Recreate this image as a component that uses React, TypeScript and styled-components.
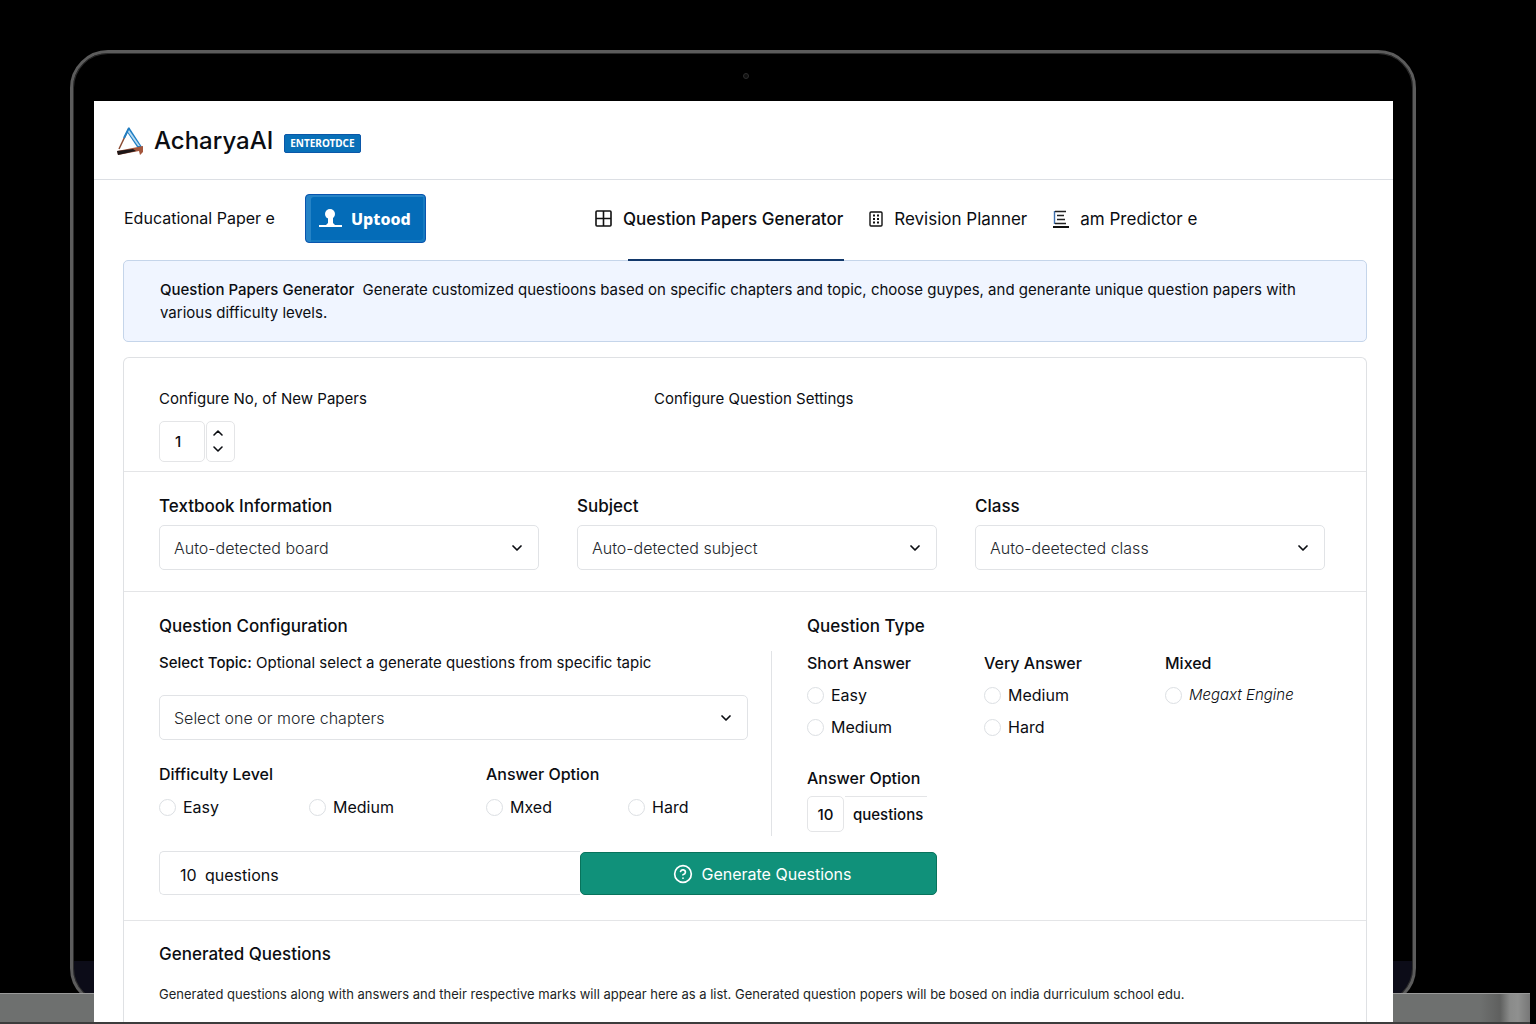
import { ReactNode } from "react";
import { ChevronDown, ChevronUp, CircleHelp } from "lucide-react";
import styled, { createGlobalStyle } from "styled-components";

const GlobalStyle = createGlobalStyle`
  * {
    box-sizing: border-box;
  }

  body {
    margin: 0;
    background: #000;
    color: #0b0d12;
    font-family: Inter, "Open Sans", sans-serif;
    font-size: 16px;
    line-height: 24px;
  }

  button,
  input,
  select {
    margin: 0;
    color: inherit;
    font: inherit;
  }

  h1,
  h2,
  h3,
  p {
    margin: 0;
  }
`;

const Desk = styled.div`
  position: relative;
  min-height: 100vh;
  padding: 50px 120px 1px 70px;
  overflow: hidden;
`;

const Lid = styled.div`
  position: relative;
  padding: 51px 23px 0 24px;

  &::before {
    content: "";
    position: absolute;
    inset: 0 0 16px;
    border: 3px solid #5c5c5c;
    border-radius: 38px;
    background: linear-gradient(to top, #0c0c18 42px, #000 42px);
    box-shadow: inset 0 0 0 1px #2c2c2c;
  }
`;

const Camera = styled.span`
  position: absolute;
  top: 23px;
  left: 50%;
  width: 6px;
  height: 6px;
  border: 1px solid #2e2e2e;
  border-radius: 50%;
  background: #111;
`;

const Base = styled.div`
  position: absolute;
  right: 6px;
  bottom: 0;
  left: 0;
  height: 31px;
  border-top: 1px solid #9a9a9a;
  border-bottom: 2px solid #3c3c3c;
  background: linear-gradient(
    to left,
    #777 0,
    #8f908f 12px,
    #8a8b8a 20px,
    #5f605f 30px,
    #6e706f 50px,
    #6e706f 100%
  );
`;

const Screen = styled.main`
  position: relative;
  z-index: 1;
  background: #fff;
`;

const Header = styled.header`
  display: flex;
  align-items: center;
  height: 79px;
  padding: 2px 22px 0;
  border-bottom: 1px solid #dcdfe4;
`;

const Brand = styled.h1`
  margin-left: 10px;
  font-size: 24px;
  font-weight: 500;
  line-height: 32px;
`;

const Badge = styled.span`
  margin: 4px 0 0 11px;
  padding: 0 5px;
  border: 1px solid #0b57a8;
  border-radius: 2px;
  background: #0870b8;
  color: #fff;
  font-family: "Noto Sans", sans-serif;
  font-size: 10px;
  font-weight: 700;
  line-height: 17px;
`;

const Content = styled.div`
  padding: 0 26px 0 29px;
`;

const Nav = styled.nav`
  display: flex;
  align-items: center;
  height: 80px;
  padding-bottom: 3px;
`;

const NavTitle = styled.span`
  width: 182px;
  padding: 0 0 2px 1px;
`;

const UploadButton = styled.button`
  display: flex;
  align-items: center;
  gap: 9px;
  width: 121px;
  height: 49px;
  padding: 0 13px;
  border: 1px solid #0a55ae;
  border-radius: 4px;
  background: #046cb8;
  box-shadow: inset 5px 2px 0 #2583c6, inset -2px -2px 0 #167ac0;
  color: #fff;
  font-family: "Noto Sans", sans-serif;
  font-weight: 800;
`;

const Tabs = styled.div`
  display: flex;
  gap: 26px;
  align-self: stretch;
  margin-left: 169px;
`;

const Tab = styled.a<{ $active?: boolean }>`
  position: relative;
  display: flex;
  align-items: center;
  gap: 11px;
  color: inherit;
  font-size: 17px;
  font-weight: ${({ $active }) => ($active ? 500 : 400)};
  text-decoration: none;
  white-space: nowrap;

  &::after {
    content: "";
    display: ${({ $active }) => ($active ? "block" : "none")};
    position: absolute;
    right: -1px;
    bottom: -4px;
    left: 33px;
    z-index: 1;
    height: 2px;
    background: #12386b;
  }
`;

const Banner = styled.section`
  padding: 17px 36px;
  border: 1px solid #c5d5ea;
  border-radius: 5px;
  background: #f0f5ff;
  font-size: 15px;
  line-height: 23px;

  strong {
    margin-right: 4px;
    font-weight: 500;
  }
`;

const Card = styled.section`
  margin-top: 15px;
  border: 1px solid #dfe1e4;
  border-bottom: 0;
  border-radius: 6px 6px 0 0;
`;

const Section = styled.form`
  padding: 22px 41px 21px 35px;

  & + & {
    border-top: 1px solid #e4e5e7;
  }
`;

const PaperRow = styled.div`
  display: grid;
  grid-template-columns: 495fr 671fr;
  padding-top: 7px;
  margin-bottom: -12px;
  font-size: 15px;
`;

const Stepper = styled.div`
  display: flex;
  gap: 1px;
  margin-top: 10px;
`;

const NumberBox = styled.input<{ $wide?: boolean }>`
  width: ${({ $wide }) => ($wide ? 46 : 37)}px;
  height: ${({ $wide }) => ($wide ? 41 : 36)}px;
  padding: 0 ${({ $wide }) => ($wide ? 8 : 0)}px 0 0;
  border: 1px solid #e4e5e7;
  border-radius: 5px;
  background: #fff;
  font-weight: 500;
  text-align: center;
`;

const StepButtons = styled.div`
  display: flex;
  flex-direction: column;
  justify-content: center;
  width: 29px;
  padding: 0 5px 2px 0;
  border: 1px solid #e4e5e7;
  border-radius: 5px;
`;

const StepButton = styled.button`
  display: flex;
  justify-content: center;
  padding: 0;
  border: 0;
  background: none;
`;

const FieldRow = styled.div`
  display: grid;
  grid-template-columns: 380fr 360fr 350fr;
  gap: 38px;
`;

const Label = styled.label`
  display: block;
  font-weight: 500;
`;

const FieldLabel = styled(Label)`
  margin-bottom: 7px;
  font-size: 17px;
`;

const SelectBox = styled.span`
  position: relative;
  display: block;

  svg {
    position: absolute;
    top: 15px;
    right: 14px;
    pointer-events: none;
  }
`;

const Select = styled.select`
  display: block;
  width: 100%;
  height: 45px;
  padding: 0 40px 0 14px;
  border: 1px solid #e1e3e6;
  border-radius: 5px;
  background: #fff;
  color: #24272d;
  font-weight: 300;
  appearance: none;
`;

const ConfigGrid = styled.div`
  display: grid;
  grid-template-columns: 612fr 554fr;
`;

const Title = styled.h2`
  font-size: 17px;
  font-weight: 500;
  line-height: 24px;
`;

const TypeTitle = styled(Title)`
  padding-left: 36px;
`;

const TopicColumn = styled.div`
  padding-right: 23px;
`;

const TypeColumn = styled.div`
  margin-top: 13px;
  padding: 0 0 4px 35px;
  border-left: 1px solid #e1e3e6;
`;

const TopicLabel = styled.label`
  display: block;
  margin: 13px 0 20px;
  font-size: 15px;

  strong {
    font-weight: 500;
  }
`;

const Group = styled.fieldset`
  display: grid;
  min-width: 0;
  margin: 0;
  padding: 0;
  border: 0;
`;

const Legend = styled.legend`
  padding: 0;
  font-weight: 500;
  line-height: 24px;
`;

const LevelRow = styled.div`
  display: grid;
  grid-template-columns: 327fr 262fr;
  margin-top: 22px;
`;

const LevelGroup = styled(Group)<{ $columns: string }>`
  grid-template-columns: ${({ $columns }) => $columns};

  label {
    margin-top: 9px;
  }
`;

const TypeRow = styled.div`
  display: grid;
  grid-template-columns: 177fr 181fr 160fr;
`;

const TypeGroup = styled(Group)`
  align-content: start;

  label {
    margin-top: 8px;
  }
`;

const RadioLabel = styled.label`
  display: flex;
  align-items: center;
  gap: 7px;
  white-space: nowrap;

  em {
    font-size: 15px;
    font-weight: 300;
  }
`;

const Radio = styled.input`
  width: 17px;
  height: 17px;
  border: 1px solid #dcdfe3;
  border-radius: 50%;
  background: #fff;
  appearance: none;

  &:checked {
    border: 5px solid #10917a;
  }
`;

const CountField = styled.div`
  display: flex;
  margin-top: 6px;
  font-size: 15px;
`;

const CountUnit = styled.span`
  padding: 6px 4px 0 8px;
  margin-left: 1px;
  border-top: 1px solid #e4e5e7;
  font-weight: 500;
`;

const AnswerLabel = styled(Label)`
  margin-top: 27px;
`;

const SubmitRow = styled.div`
  display: grid;
  grid-template-columns: 421fr 357fr 388fr;
  margin: 15px 0 4px;
`;

const TotalField = styled.label`
  display: flex;
  align-items: center;
  height: 44px;
  padding: 3px 20px 0;
  border: 1px solid #e1e3e6;
  border-right: 0;
  border-radius: 5px 0 0 5px;
`;

const TotalInput = styled.input`
  width: 25px;
  padding: 0;
  border: 0;
  background: none;
`;

const GenerateButton = styled.button`
  display: flex;
  align-items: center;
  justify-content: center;
  gap: 8px;
  height: 43px;
  margin-top: 1px;
  padding: 0 0 0 8px;
  border: 1px solid #08735c;
  border-radius: 5px;
  background: #10917a;
  color: #fff;
`;

const Results = styled.section`
  padding: 21px 35px 17px;
  border-top: 1px solid #e4e5e7;

  p {
    margin-top: 17px;
    color: #1c1f25;
    font-size: 13px;
    line-height: 22px;
  }
`;

const Logo = () => (
  <svg width="28" height="30" viewBox="0 0 28 30" aria-hidden="true">
    <path d="M13 2 L3 23" stroke="#8a4b32" strokeWidth="1.5" />
    <path d="M13 2 L8 12" stroke="#1f7fc4" strokeWidth="2" />
    <path d="M13 1 L26 21 L21 21 L11 6 Z" fill="#1f7fc4" />
    <path d="M13 4 L24 20 L22 20 L12 6 Z" fill="#b9dcf3" />
    <path d="M1 25 L27 20 L27 26 L24 29 L23 25 L2 29 Z" fill="#a4563c" />
    <path d="M1 25 L17 23 L20 25 L2 29 Z" fill="#1d1718" />
  </svg>
);

const UploadIcon = () => (
  <svg width="23" height="19" viewBox="0 0 23 19" aria-hidden="true">
    <circle cx="11" cy="5" r="5" fill="#fff" />
    <path d="M9 8h5v6l2 2H7l2-2z" fill="#fff" />
    <path d="M0 17h23" stroke="#fff" strokeWidth="2" />
  </svg>
);

const GridIcon = () => (
  <svg width="17" height="17" viewBox="0 0 17 17" fill="none" aria-hidden="true">
    <rect x="1" y="1" width="15" height="15" rx="1" stroke="#111" strokeWidth="1.6" />
    <path d="M8.5 1v15M1 8.5h15" stroke="#111" strokeWidth="1.6" />
  </svg>
);

const PlannerIcon = () => (
  <svg width="14" height="16" viewBox="0 0 14 16" fill="none" aria-hidden="true">
    <rect x="1" y="1" width="12" height="14" rx="1" stroke="#111" strokeWidth="1.4" />
    <path
      d="M4 4.5h2M8 4.5h2M4 8h2M8 8h2M4 11.5h2M8 11.5h2"
      stroke="#111"
      strokeWidth="1.8"
    />
  </svg>
);

const ExamIcon = () => (
  <svg width="16" height="18" viewBox="0 0 16 18" fill="none" aria-hidden="true">
    <path d="M1.5 1v13" stroke="#3d6fae" strokeWidth="1.4" />
    <path d="M2 1.5h11M4 5.500h7M4 9.500h8M2 13.500h11" stroke="#222" strokeWidth="1.4" />
    <path d="M0 17h16" stroke="#111" strokeWidth="2" />
  </svg>
);

interface SelectFieldProps {
  id: string;
  value: string;
}

const SelectField = ({ id, value }: SelectFieldProps) => (
  <SelectBox>
    <Select id={id}>
      <option>{value}</option>
    </Select>
    <ChevronDown size={16} strokeWidth={2.6} />
  </SelectBox>
);

interface OptionProps {
  name: string;
  children: ReactNode;
}

const Option = ({ name, children }: OptionProps) => (
  <RadioLabel>
    <Radio type="radio" name={name} />
    {children}
  </RadioLabel>
);

const App = () => (
  <Desk>
    <GlobalStyle />
    <Lid>
      <Camera />
      <Screen>
        <Header>
          <Logo />
          <Brand>AcharyaAI</Brand>
          <Badge>ENTEROTDCE</Badge>
        </Header>
        <Content>
          <Nav>
            <NavTitle>Educational Paper e</NavTitle>
            <UploadButton type="button">
              <UploadIcon />
              Uptood
            </UploadButton>
            <Tabs>
              <Tab href="#generator" $active>
                <GridIcon />
                Question Papers Generator
              </Tab>
              <Tab href="#planner">
                <PlannerIcon />
                Revision Planner
              </Tab>
              <Tab href="#predictor">
                <ExamIcon />
                am Predictor e
              </Tab>
            </Tabs>
          </Nav>

          <Banner>
            <strong>Question Papers Generator</strong> Generate customized
            questioons based on specific chapters and topic, choose guypes, and
            generante unique question papers with various difficulty levels.
          </Banner>

          <Card>
            <Section>
              <PaperRow>
                <div>
                  <label htmlFor="papers">Configure No, of New Papers</label>
                  <Stepper>
                    <NumberBox id="papers" defaultValue="1" $wide />
                    <StepButtons>
                      <StepButton type="button" aria-label="More papers">
                        <ChevronUp size={16} strokeWidth={2.4} />
                      </StepButton>
                      <StepButton type="button" aria-label="Fewer papers">
                        <ChevronDown size={16} strokeWidth={2.4} />
                      </StepButton>
                    </StepButtons>
                  </Stepper>
                </div>
                <p>Configure Question Settings</p>
              </PaperRow>
            </Section>

            <Section>
              <FieldRow>
                <div>
                  <FieldLabel htmlFor="board">Textbook Information</FieldLabel>
                  <SelectField id="board" value="Auto-detected board" />
                </div>
                <div>
                  <FieldLabel htmlFor="subject">Subject</FieldLabel>
                  <SelectField id="subject" value="Auto-detected subject" />
                </div>
                <div>
                  <FieldLabel htmlFor="class">Class</FieldLabel>
                  <SelectField id="class" value="Auto-deetected class" />
                </div>
              </FieldRow>
            </Section>

            <Section>
              <ConfigGrid>
                <Title>Question Configuration</Title>
                <TypeTitle>Question Type</TypeTitle>
                <TopicColumn>
                  <TopicLabel htmlFor="topic">
                    <strong>Select Topic:</strong> Optional select a generate
                    questions from specific tapic
                  </TopicLabel>
                  <SelectField id="topic" value="Select one or more chapters" />
                  <LevelRow>
                    <LevelGroup $columns="150fr 177fr">
                      <Legend>Difficulty Level</Legend>
                      <Option name="level">Easy</Option>
                      <Option name="level">Medium</Option>
                    </LevelGroup>
                    <LevelGroup $columns="142fr 120fr">
                      <Legend>Answer Option</Legend>
                      <Option name="answer">Mxed</Option>
                      <Option name="answer">Hard</Option>
                    </LevelGroup>
                  </LevelRow>
                </TopicColumn>
                <TypeColumn>
                  <TypeRow>
                    <TypeGroup>
                      <Legend>Short Answer</Legend>
                      <Option name="short">Easy</Option>
                      <Option name="short">Medium</Option>
                    </TypeGroup>
                    <TypeGroup>
                      <Legend>Very Answer</Legend>
                      <Option name="very">Medium</Option>
                      <Option name="very">Hard</Option>
                    </TypeGroup>
                    <TypeGroup>
                      <Legend>Mixed</Legend>
                      <Option name="mixed">
                        <em>Megaxt Engine</em>
                      </Option>
                    </TypeGroup>
                  </TypeRow>
                  <AnswerLabel htmlFor="count">Answer Option</AnswerLabel>
                  <CountField>
                    <NumberBox id="count" defaultValue="10" />
                    <CountUnit>questions</CountUnit>
                  </CountField>
                </TypeColumn>
              </ConfigGrid>
              <SubmitRow>
                <TotalField>
                  <TotalInput defaultValue="10" />
                  questions
                </TotalField>
                <GenerateButton type="button">
                  <CircleHelp size={20} />
                  Generate Questions
                </GenerateButton>
              </SubmitRow>
            </Section>

            <Results>
              <Title>Generated Questions</Title>
              <p>
                Generated questions along with answers and their respective
                marks will appear here as a list. Generated question popers
                will be bosed on india durriculum school edu.
              </p>
            </Results>
          </Card>
        </Content>
      </Screen>
    </Lid>
    <Base />
  </Desk>
);

export default App;
